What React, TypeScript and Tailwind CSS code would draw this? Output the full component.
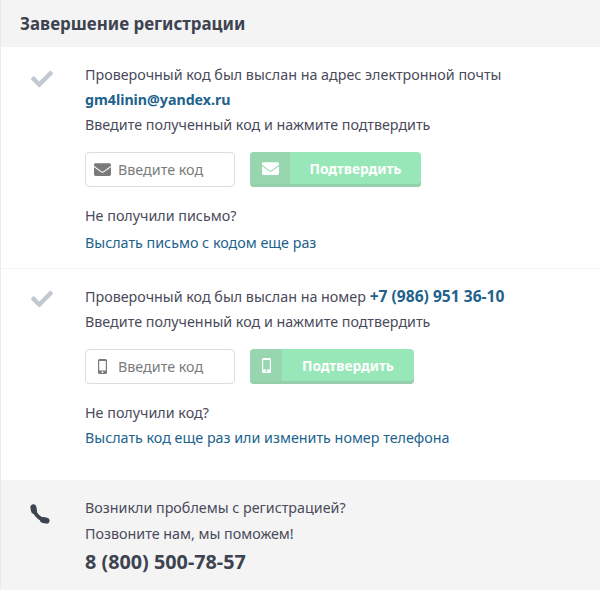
import React from "react";
import { FaCheck, FaEnvelope } from "react-icons/fa";

const font = "font-['Noto_Sans','Open_Sans',sans-serif]";

// thin-framed phone, the package one has a much heavier frame
function MobileIcon() {
  return (
    <svg width="9" height="15" viewBox="0 0 9 15" fill="currentColor">
      <path
        fillRule="evenodd"
        d="M1.5 0h6A1.5 1.5 0 0 1 9 1.5v12A1.5 1.5 0 0 1 7.5 15h-6A1.5 1.5 0 0 1 0 13.5v-12A1.5 1.5 0 0 1 1.5 0zM1.2 2v9.6h6.6V2zM4.5 12.3a.9.9 0 1 0 0 1.8.9.9 0 0 0 0-1.8z"
      />
    </svg>
  );
}

function HandsetIcon() {
  return (
    <svg width="20" height="20" viewBox="0 0 20 20" fill="none" stroke="currentColor" strokeLinecap="round">
      <path d="M3.6 3.4C4 10 10 16 16.4 16.4" strokeWidth="3.8" />
      <path d="M3.4 3.2L4 6.8" strokeWidth="6" />
      <path d="M13 16L16.6 16.6" strokeWidth="6" />
    </svg>
  );
}

function CodeRow({ icon, btnClass, tabClass }: { icon: React.ReactNode; btnClass: string; tabClass: string }) {
  return (
    <div className="flex gap-[15px]">
      <div className="flex h-[35px] w-[150px] items-center rounded-[4px] border border-[#dedede] bg-white">
        <span className="flex w-[32px] justify-center text-[#7a7a7a]">{icon}</span>
        <span className="text-[14.3px] text-[#7b7b7b]">Введите код</span>
      </div>
      <div className={`flex h-[35px] overflow-hidden rounded-[4px] bg-[#98e7b8] shadow-[inset_0_-3px_0_#96cfab] ${btnClass}`}>
        <span className={`flex h-[32px] items-center justify-center bg-[#98d6b0] text-white ${tabClass}`}>{icon}</span>
        <span className="flex h-[32px] flex-1 items-center justify-center text-[13.7px] font-bold text-white">Подтвердить</span>
      </div>
    </div>
  );
}

export default function App() {
  return (
    <div className={`${font} h-[590px] w-[600px] overflow-hidden border-l border-[#e3edf5] bg-white text-[14.3px] leading-[25px] text-[#4a4a5a]`}>
      <div className="-ml-[1px] flex h-[47px] items-center bg-[#f4f4f4] pl-[20px] text-[16.9px] font-bold text-[#3d4350]">
        Завершение регистрации
      </div>

      <section className="flex h-[222px] border-b border-[#f4f4f4] pt-[15px]">
        <div className="w-[84px] pl-[30px] pt-[6px] text-[22px] text-[#c3c9d0]">
          <FaCheck />
        </div>
        <div>
          <p>Проверочный код был выслан на адрес электронной почты</p>
          <p className="text-[14.2px] font-bold text-[#21628c]">gm4linin@yandex.ru</p>
          <p>Введите полученный код и нажмите подтвердить</p>
          <div className="mt-[15px]">
            <CodeRow icon={<FaEnvelope size={17} />} btnClass="w-[171px]" tabClass="w-[40px]" />
          </div>
          <p className="mt-[16px]">Не получили письмо?</p>
          <p className="mt-[2px] text-[#21628c]">Выслать письмо с кодом еще раз</p>
        </div>
      </section>

      <section className="flex h-[211px] pt-[15px]">
        <div className="w-[84px] pl-[30px] pt-[4px] text-[22px] text-[#c3c9d0]">
          <FaCheck />
        </div>
        <div>
          <p>
            Проверочный код был выслан на номер{" "}
            <span className="text-[15.6px] font-bold text-[#21628c]">+7 (986) 951 36-10</span>
          </p>
          <p>Введите полученный код и нажмите подтвердить</p>
          <div className="mt-[15px]">
            <CodeRow icon={<MobileIcon />} btnClass="w-[164px]" tabClass="w-[32px]" />
          </div>
          <p className="mt-[16px]">Не получили код?</p>
          <p className="text-[#21628c]">Выслать код еще раз или изменить номер телефона</p>
        </div>
      </section>

      <section className="-ml-[1px] flex h-[110px] bg-[#f4f4f4] pt-[15px]">
        <div className="w-[85px] pl-[30px] pt-[9px] text-[#3d4350]">
          <HandsetIcon />
        </div>
        <div>
          <p>Возникли проблемы с регистрацией?</p>
          <p className="mt-[1px]">Позвоните нам, мы поможем!</p>
          <p className="mt-[3px] text-[19.8px] font-bold text-[#3d4350]">8 (800) 500-78-57</p>
        </div>
      </section>
    </div>
  );
}
